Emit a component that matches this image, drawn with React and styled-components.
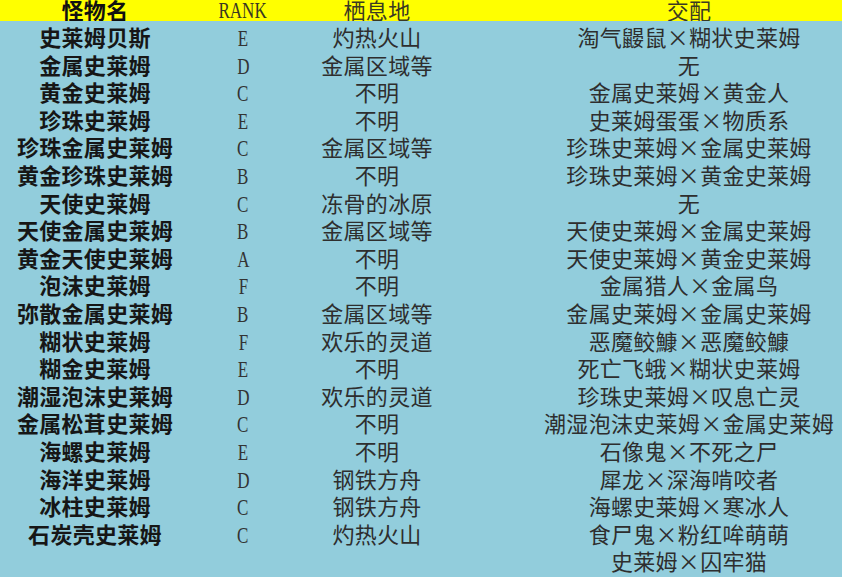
import React from 'react'
import styled, { createGlobalStyle } from 'styled-components'

const GlobalStyle = createGlobalStyle`
  html, body {
    margin: 0;
    padding: 0;
    background: #92cddc;
    overflow: hidden;
  }
`

const monsters = [
  ['史莱姆贝斯', 'E', '灼热火山', ['淘气鼹鼠×糊状史莱姆']],
  ['金属史莱姆', 'D', '金属区域等', ['无']],
  ['黄金史莱姆', 'C', '不明', ['金属史莱姆×黄金人']],
  ['珍珠史莱姆', 'E', '不明', ['史莱姆蛋蛋×物质系']],
  ['珍珠金属史莱姆', 'C', '金属区域等', ['珍珠史莱姆×金属史莱姆']],
  ['黄金珍珠史莱姆', 'B', '不明', ['珍珠史莱姆×黄金史莱姆']],
  ['天使史莱姆', 'C', '冻骨的冰原', ['无']],
  ['天使金属史莱姆', 'B', '金属区域等', ['天使史莱姆×金属史莱姆']],
  ['黄金天使史莱姆', 'A', '不明', ['天使史莱姆×黄金史莱姆']],
  ['泡沫史莱姆', 'F', '不明', ['金属猎人×金属鸟']],
  ['弥散金属史莱姆', 'B', '金属区域等', ['金属史莱姆×金属史莱姆']],
  ['糊状史莱姆', 'F', '欢乐的灵道', ['恶魔鲛鱇×恶魔鲛鱇']],
  ['糊金史莱姆', 'E', '不明', ['死亡飞蛾×糊状史莱姆']],
  ['潮湿泡沫史莱姆', 'D', '欢乐的灵道', ['珍珠史莱姆×叹息亡灵']],
  ['金属松茸史莱姆', 'C', '不明', ['潮湿泡沫史莱姆×金属史莱姆']],
  ['海螺史莱姆', 'E', '不明', ['石像鬼×不死之尸']],
  ['海洋史莱姆', 'D', '钢铁方舟', ['犀龙×深海啃咬者']],
  ['冰柱史莱姆', 'C', '钢铁方舟', ['海螺史莱姆×寒冰人']],
  ['石炭壳史莱姆', 'C', '灼热火山', ['食尸鬼×粉红哞萌萌', '史莱姆×囚牢猫']],
]

const cjk = `"Noto Sans CJK SC", "Noto Sans", sans-serif`

const Table = styled.div`
  width: 920px;
  font-family: ${cjk};
  font-size: 22px;
  letter-spacing: 0.3px;
`

const Grid = styled.div`
  display: grid;
  grid-template-columns: 190px 106px 162px 462px;
`

const HeaderRow = styled(Grid)`
  background: #ffff00;
  height: 21px;
  line-height: 19px;
  color: #333;
  overflow: hidden;
`

const HeadCell = styled.div`
  text-align: center;
  white-space: nowrap;
  font-weight: ${({ $bold }) => ($bold ? 700 : 400)};
  color: ${({ $bold }) => ($bold ? '#111' : '#3a3a22')};
`

const Body = styled.div`
  padding-top: 2px;
`

const Row = styled(Grid)`
  line-height: 27.6px;
`

const Line = styled.div`
  height: 27.6px;
`

const NameCell = styled.div`
  text-align: center;
  white-space: nowrap;
  font-weight: 700;
  color: #161616;
`

const Cell = styled.div`
  text-align: center;
  white-space: nowrap;
  color: #2e2e2e;
`

const MatingCell = styled(Cell)`
  font-feature-settings: "fwid";
`

const Rank = styled.span`
  display: inline-block;
  vertical-align: top;
  line-height: inherit;
  font-family: "Liberation Serif", serif;
  font-size: 23px;
  letter-spacing: 0;
  transform: translateY(${({ $head }) => ($head ? 1 : 2)}px) scaleX(0.74);
  color: ${({ $head }) => ($head ? '#3a3a22' : '#333')};
`

export default function App() {
  return (
    <>
      <GlobalStyle />
      <Table>
        <HeaderRow>
          <HeadCell $bold>怪物名</HeadCell>
          <HeadCell><Rank $head>RANK</Rank></HeadCell>
          <HeadCell>栖息地</HeadCell>
          <HeadCell>交配</HeadCell>
        </HeaderRow>
        <Body>
          {monsters.map(([name, rank, habitat, mating]) => (
            <Row key={name}>
              <NameCell><Line>{name}</Line></NameCell>
              <Cell><Line><Rank>{rank}</Rank></Line></Cell>
              <Cell><Line>{habitat}</Line></Cell>
              <MatingCell>
                {mating.map((line) => (
                  <Line key={line}>{line}</Line>
                ))}
              </MatingCell>
            </Row>
          ))}
        </Body>
      </Table>
    </>
  )
}
